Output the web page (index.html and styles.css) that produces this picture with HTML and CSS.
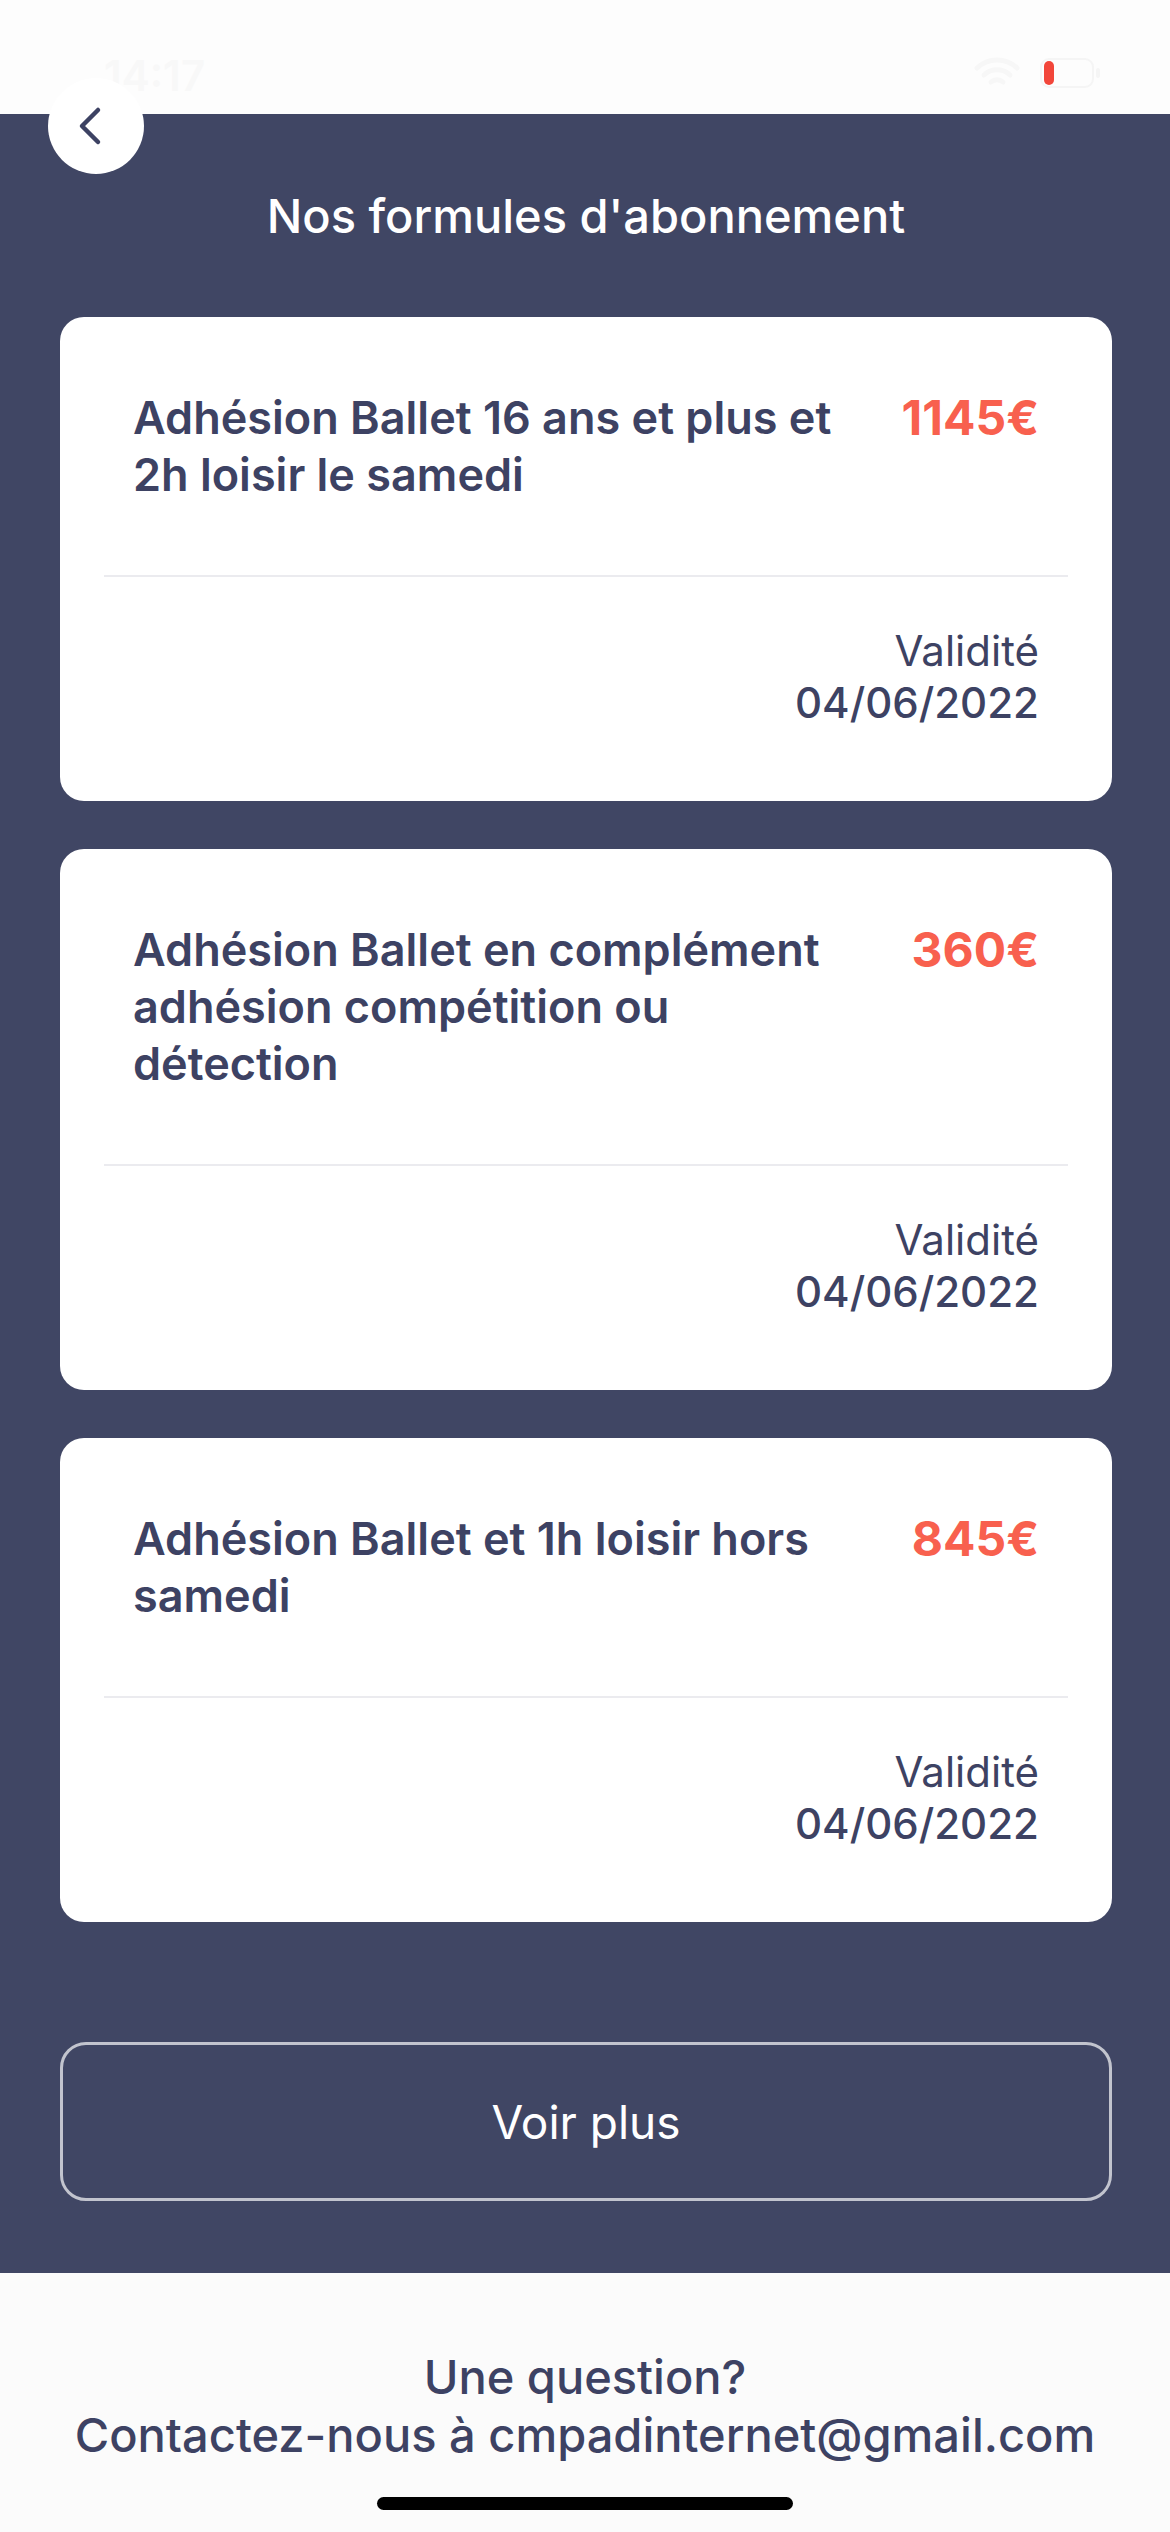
FILE: index.html
```html
<!DOCTYPE html>
<html lang="fr">
<head>
    <meta charset="UTF-8">
    <meta name="viewport" content="width=device-width, initial-scale=1.0">
    <title>Nos formules d'abonnement</title>
    <link rel="stylesheet" href="styles.css">
</head>
<body>
    <div class="status-bar">
        <span class="time">14:17</span>
        <div class="status-icons">
            <svg class="wifi" width="46" height="32" viewBox="0 0 46 32">
                <path d="M3 11 A29 29 0 0 1 43 11" fill="none" stroke="#f7f7f7" stroke-width="5" stroke-linecap="round"/>
                <path d="M10 18 A19 19 0 0 1 36 18" fill="none" stroke="#f7f7f7" stroke-width="5" stroke-linecap="round"/>
                <path d="M17 25 A9 9 0 0 1 29 25" fill="none" stroke="#f7f7f7" stroke-width="5" stroke-linecap="round"/>
            </svg>
            <svg class="battery" width="62" height="30" viewBox="0 0 62 30">
                <rect x="1" y="1" width="52" height="28" rx="8" fill="none" stroke="#f5f5f5" stroke-width="2"/>
                <rect x="56" y="10" width="4" height="10" rx="2" fill="#f5f5f5"/>
                <rect x="4" y="3" width="10" height="24" rx="5" fill="#f2463a"/>
            </svg>
        </div>
    </div>

    <button class="back-btn" type="button" aria-label="Retour">
        <svg width="30" height="44" viewBox="0 0 30 44">
            <path d="M21 6 L5 22 L21 38" fill="none" stroke="#3d4263" stroke-width="4.5" stroke-linecap="round" stroke-linejoin="round"/>
        </svg>
    </button>

    <main class="content">
        <h1>Nos formules d'abonnement</h1>

        <div class="card">
            <div class="card-top">
                <p class="card-title">Adhésion Ballet 16 ans et plus et 2h loisir le samedi</p>
                <span class="price">1145€</span>
            </div>
            <hr class="divider">
            <div class="card-bottom">
                <span class="label">Validité</span>
                <span class="date">04/06/2022</span>
            </div>
        </div>

        <div class="card">
            <div class="card-top">
                <p class="card-title">Adhésion Ballet en complément adhésion compétition ou détection</p>
                <span class="price">360€</span>
            </div>
            <hr class="divider">
            <div class="card-bottom">
                <span class="label">Validité</span>
                <span class="date">04/06/2022</span>
            </div>
        </div>

        <div class="card">
            <div class="card-top">
                <p class="card-title">Adhésion Ballet et 1h loisir hors samedi</p>
                <span class="price">845€</span>
            </div>
            <hr class="divider">
            <div class="card-bottom">
                <span class="label">Validité</span>
                <span class="date">04/06/2022</span>
            </div>
        </div>

        <button class="more-btn" type="button">Voir plus</button>
    </main>

    <footer class="footer">
        <p>Une question?<br>Contactez-nous à cmpadinternet@gmail.com</p>
        <div class="home-indicator"></div>
    </footer>
</body>
</html>
```

FILE: styles.css
```css
body {
    margin: 0;
    font-family: Inter, "Noto Sans", sans-serif;
    background-color: #fbfbfb;
    color: #3d4263;
}
.status-bar {
    height: 114px;
    background-color: #fdfdfd;
    display: flex;
    justify-content: space-between;
    align-items: flex-start;
    padding: 0 68px 0 104px;
    box-sizing: border-box;
}
.time {
    margin-top: 50px;
    font-size: 42px;
    font-weight: 600;
    color: #f8f8f8;
}
.status-icons {
    display: flex;
    align-items: center;
    gap: 20px;
    margin-top: 57px;
}
.back-btn {
    position: absolute;
    left: 48px;
    top: 78px;
    width: 96px;
    height: 96px;
    border-radius: 50%;
    border: none;
    background-color: #ffffff;
    display: flex;
    align-items: center;
    justify-content: center;
    padding: 0 8px 0 0;
    cursor: pointer;
}
.content {
    background-color: #404664;
    padding: 74px 58px 72px 60px;
}
h1 {
    margin: 0 0 73px;
    text-align: center;
    color: #ffffff;
    font-size: 47px;
    line-height: 56px;
    font-weight: 500;
}
.card {
    background-color: #ffffff;
    border-radius: 24px;
    padding: 0 44px;
    margin-bottom: 48px;
}
.card-top {
    display: flex;
    justify-content: space-between;
    align-items: flex-start;
    gap: 40px;
    padding: 72px 29px 72px;
}
.card-title {
    margin: 0;
    font-size: 45px;
    line-height: 57px;
    font-weight: 600;
    max-width: 710px;
}
.price {
    font-size: 48px;
    line-height: 57px;
    font-weight: 700;
    color: #f8604e;
    white-space: nowrap;
}
.divider {
    margin: 0;
    border: none;
    height: 2px;
    background-color: #ebebef;
}
.card-bottom {
    display: flex;
    flex-direction: column;
    align-items: flex-end;
    padding: 48px 29px 72px;
}
.label {
    font-size: 42px;
    line-height: 52px;
    font-weight: 400;
}
.date {
    font-size: 42px;
    line-height: 52px;
    font-weight: 500;
}
.more-btn {
    display: block;
    width: 100%;
    height: 159px;
    margin-top: 120px;
    background: transparent;
    border: 3px solid #c2c4ce;
    border-radius: 26px;
    color: #ffffff;
    font-family: Inter, "Noto Sans", sans-serif;
    font-size: 46px;
    font-weight: 400;
    cursor: pointer;
}
.footer {
    padding-top: 75px;
    height: 260px;
    box-sizing: border-box;
    text-align: center;
}
.footer p {
    margin: 0;
    font-size: 47px;
    line-height: 58px;
    font-weight: 500;
}
.home-indicator {
    width: 416px;
    height: 13px;
    border-radius: 7px;
    background-color: #000000;
    margin: 33px auto 0;
}
```
